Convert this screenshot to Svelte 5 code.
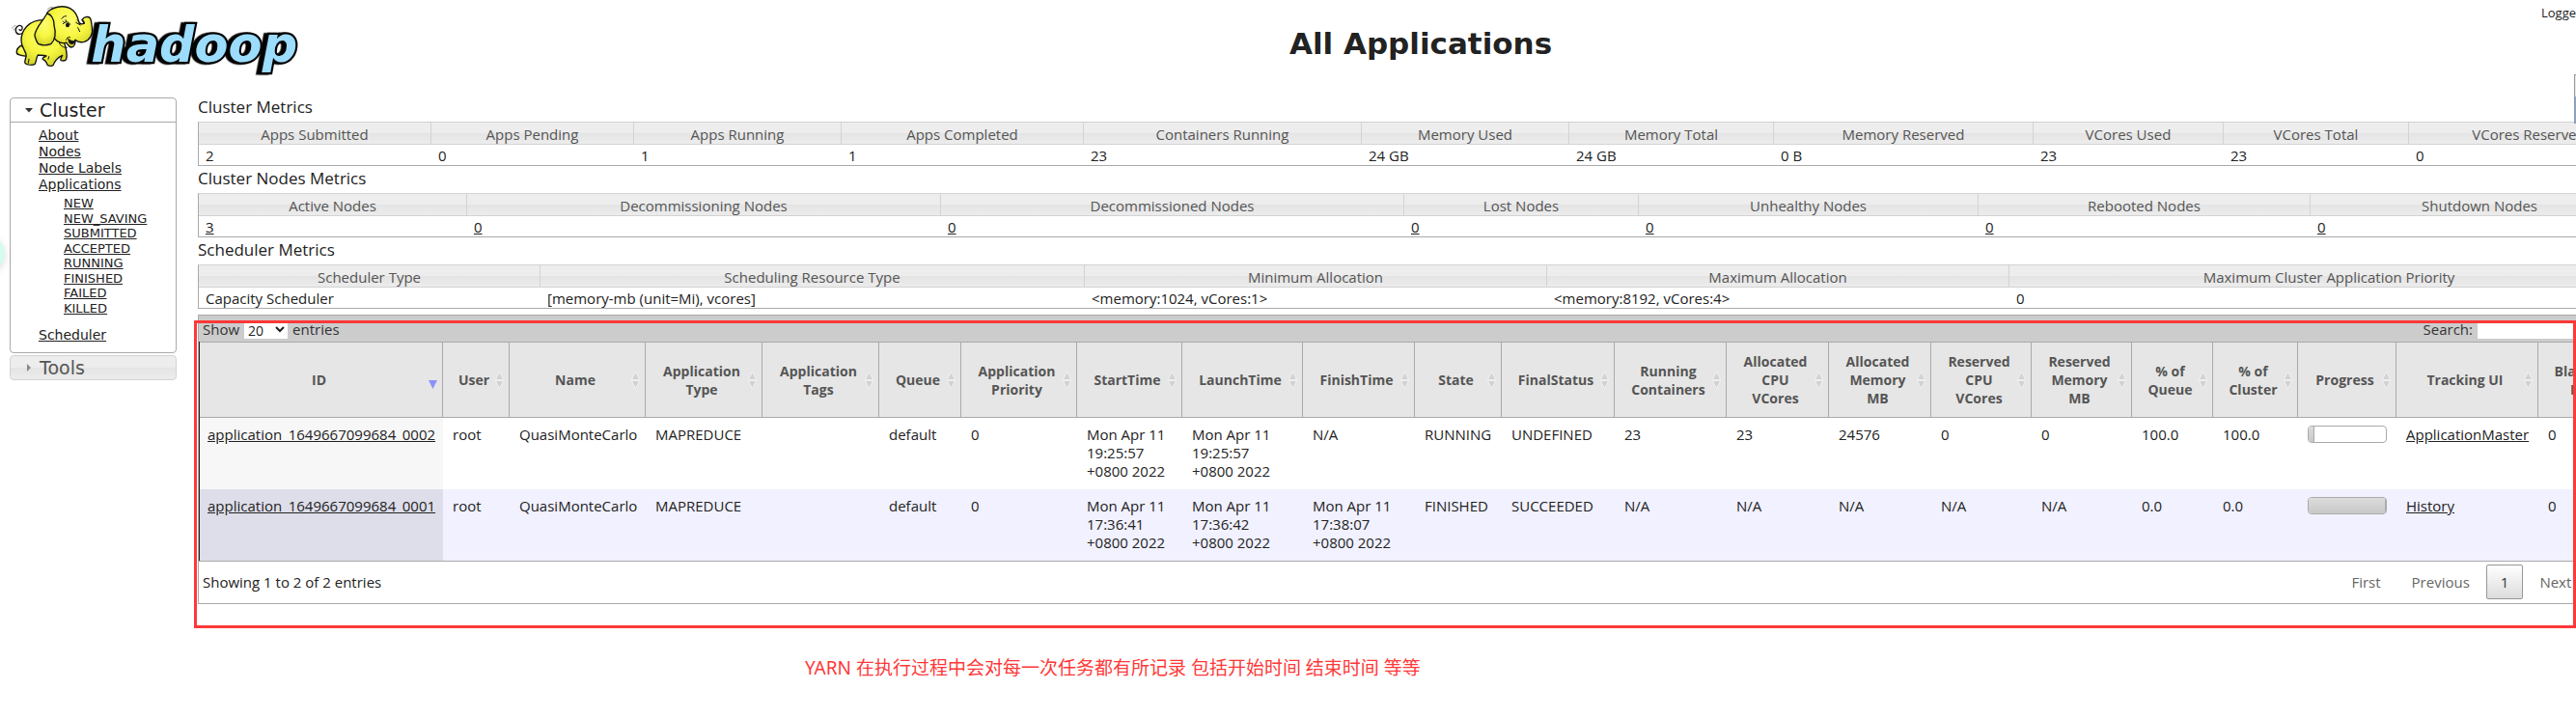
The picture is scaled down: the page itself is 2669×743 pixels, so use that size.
<script>
  const topLinks = ['About', 'Nodes', 'Node Labels', 'Applications'];
  const states = ['NEW', 'NEW_SAVING', 'SUBMITTED', 'ACCEPTED', 'RUNNING', 'FINISHED', 'FAILED', 'KILLED'];

  // Each column: [heading, value, relative width]
  const metrics = [
    {
      title: 'Cluster Metrics',
      linked: false,
      columns: [
        ['Apps Submitted', '2', 241],
        ['Apps Pending', '0', 210],
        ['Apps Running', '1', 215],
        ['Apps Completed', '1', 251],
        ['Containers Running', '23', 288],
        ['Memory Used', '24 GB', 215],
        ['Memory Total', '24 GB', 212],
        ['Memory Reserved', '0 B', 269],
        ['VCores Used', '23', 197],
        ['VCores Total', '23', 192],
        ['VCores Reserved', '0', 249]
      ]
    },
    {
      title: 'Cluster Nodes Metrics',
      linked: true,
      columns: [
        ['Active Nodes', '3', 278],
        ['Decommissioning Nodes', '0', 491],
        ['Decommissioned Nodes', '0', 480],
        ['Lost Nodes', '0', 243],
        ['Unhealthy Nodes', '0', 352],
        ['Rebooted Nodes', '0', 344],
        ['Shutdown Nodes', '0', 351]
      ]
    },
    {
      title: 'Scheduler Metrics',
      linked: false,
      columns: [
        ['Scheduler Type', 'Capacity Scheduler', 354],
        ['Scheduling Resource Type', '[memory-mb (unit=Mi), vcores]', 564],
        ['Minimum Allocation', '<memory:1024, vCores:1>', 479],
        ['Maximum Allocation', '<memory:8192, vCores:4>', 479],
        ['Maximum Cluster Application Priority', '0', 663]
      ]
    }
  ];

  const columns = [
    ['ID', 252],
    ['User', 69],
    ['Name', 141],
    ['Application Type', 121],
    ['Application Tags', 121],
    ['Queue', 85],
    ['Application Priority', 120],
    ['StartTime', 109],
    ['LaunchTime', 125],
    ['FinishTime', 116],
    ['State', 90],
    ['FinalStatus', 117],
    ['Running Containers', 116],
    ['Allocated CPU VCores', 106],
    ['Allocated Memory MB', 106],
    ['Reserved CPU VCores', 104],
    ['Reserved Memory MB', 104],
    ['% of Queue', 84],
    ['% of Cluster', 88],
    ['Progress', 102],
    ['Tracking UI', 147],
    ['Blacklisted Nodes', 115]
  ];

  const apps = [
    {
      id: 'application_1649667099684_0002',
      before: ['root', 'QuasiMonteCarlo', 'MAPREDUCE', '', 'default', '0', 'Mon Apr 11 19:25:57 +0800 2022', 'Mon Apr 11 19:25:57 +0800 2022', 'N/A', 'RUNNING', 'UNDEFINED', '23', '23', '24576', '0', '0', '100.0', '100.0'],
      progress: 7,
      tracking: 'ApplicationMaster',
      blacklisted: '0'
    },
    {
      id: 'application_1649667099684_0001',
      before: ['root', 'QuasiMonteCarlo', 'MAPREDUCE', '', 'default', '0', 'Mon Apr 11 17:36:41 +0800 2022', 'Mon Apr 11 17:36:42 +0800 2022', 'Mon Apr 11 17:38:07 +0800 2022', 'FINISHED', 'SUCCEEDED', 'N/A', 'N/A', 'N/A', 'N/A', 'N/A', '0.0', '0.0'],
      progress: 100,
      tracking: 'History',
      blacklisted: '0'
    }
  ];

  const sum = (list) => list.reduce((a, b) => a + b, 0);
  const appTotal = sum(columns.map((c) => c[1]));
</script>

<div class="viewport">
  <div class="page">
    <header>
      <a class="logo" href="#home" aria-label="Hadoop home">
        <svg viewBox="0 0 990 270" width="330" height="90">
          <defs>
            <radialGradient id="skin" cx="0.5" cy="0.35" r="0.65">
              <stop offset="0" stop-color="#fdfd70" />
              <stop offset="0.6" stop-color="#f6f641" />
              <stop offset="1" stop-color="#d6d62a" />
            </radialGradient>
          </defs>
          <text class="wordmark" x="283" y="191">hadoop</text>
          <g fill="url(#skin)" stroke="#111" stroke-width="4" stroke-linejoin="round" stroke-linecap="round">
            <path d="M78 92C70 110 52 110 49 96C47 82 62 74 69 84C71 92 64 98 60 92" fill="none" stroke-width="4" />
            <path d="M64 142C50 152 48 166 58 170C66 173 74 175 82 174L90 150Z" />
            <path d="M134 62C92 62 66 92 66 126C66 152 84 158 81 176C78 188 74 196 80 198C88 203 102 202 108 200C114 190 112 178 118 171C126 172 134 172 144 174C136 178 130 180 133 184C142 188 146 196 148 203C156 206 162 205 165 203C170 190 180 178 194 172C190 180 186 186 190 188C198 190 204 188 206 184C210 170 206 158 204 148L190 90Z" />
            <path d="M146 40C160 22 196 14 218 26C236 36 242 50 246 72C252 76 260 76 262 70L256 61C260 52 274 50 280 56C284 62 284 72 286 84C290 106 280 124 262 130C250 133 240 130 234 124C234 136 230 147 222 147C212 146 210 136 206 132C196 136 188 134 178 128L150 100Z" />
            <path d="M146 42C136 62 106 92 108 112C112 124 114 132 120 137C130 141 146 141 158 137C172 124 174 100 168 78C168 60 160 44 146 42Z" />
            <path d="M212 120C220 128 228 130 236 124C232 136 224 140 218 136C212 132 214 126 212 120Z" fill="#111" stroke-width="2" />
          </g>
          <g fill="none" stroke="#111" stroke-width="3" stroke-linecap="round">
            <path d="M196 74C202 66 214 66 218 76M200 70L196 66M206 67L204 62M192 58C196 52 200 50 206 50" />
            <path d="M240 62L252 74M236 70L250 78M242 86L248 98M254 62L262 74" />
            <path d="M148 30C150 24 156 22 164 22M152 36L158 30M38 88C40 82 42 80 48 80M42 94L46 88" stroke="#777" stroke-width="2" />
            <path d="M206 124C208 116 212 114 218 116M184 132C186 142 196 148 208 148M90 184L88 196M152 176L150 184" />
          </g>
          <ellipse cx="210" cy="78" rx="6" ry="7" fill="#111" />
        </svg>
      </a>
      <h1>All Applications</h1>
      <div class="user">Logged in as: dr.who</div>
    </header>

    <div class="body">
      <nav aria-label="Cluster navigation">
        <section class="panel">
          <h3 class="open">
            <svg width="9" height="5" viewBox="0 0 9 5"><path d="M0 0H8L4 4.500Z" fill="#333" /></svg>Cluster
          </h3>
          <ul class="links">
            {#each topLinks as link}
              <li><a href="#{link}">{link}</a></li>
            {/each}
            <li>
              <ul class="states">
                {#each states as state}
                  <li><a href="#{state}">{state}</a></li>
                {/each}
              </ul>
            </li>
            <li><a href="#scheduler">Scheduler</a></li>
          </ul>
        </section>
        <h3 class="closed">
          <svg width="9" height="9" viewBox="0 0 9 9"><path d="M2 0L6 4L2 8Z" fill="#888" /></svg>Tools
        </h3>
      </nav>

      <main>
        {#each metrics as table}
          <h2>{table.title}</h2>
          <table class="metrics">
            <colgroup>
              {#each table.columns as c}
                <col style="width: {(c[2] / sum(table.columns.map((x) => x[2]))) * 100}%" />
              {/each}
            </colgroup>
            <thead>
              <tr>{#each table.columns as c}<th>{c[0]}</th>{/each}</tr>
            </thead>
            <tbody>
              <tr>
                {#each table.columns as c}
                  <td>{#if table.linked}<a href="#nodes">{c[1]}</a>{:else}{c[1]}{/if}</td>
                {/each}
              </tr>
            </tbody>
          </table>
        {/each}

        <div class="apps">
          <div class="toolbar">
            <label>Show <select><option>20</option><option>40</option><option>60</option></select> entries</label>
            <label>Search: <input type="text" /></label>
          </div>
          <table class="grid">
            <colgroup>
              {#each columns as c}<col style="width: {(c[1] / appTotal) * 100}%" />{/each}
            </colgroup>
            <thead>
              <tr>
                {#each columns as c, i}
                  <th>
                    <div class="head">
                      <span>{c[0]}</span>
                      {#if i === 0}
                        <svg width="9" height="18" viewBox="0 0 9 18"><path d="M0 9H9L4.500 18Z" fill="#8d91fa" /></svg>
                      {:else}
                        <svg width="9" height="18" viewBox="0 0 9 18"><path d="M4.500 0.500L8.500 8.500H0.500ZM0.500 9.500H8.500L4.500 17.500Z" fill="#d2d2d2" stroke="#f4f4f4" stroke-width="0.800" /></svg>
                      {/if}
                    </div>
                  </th>
                {/each}
              </tr>
            </thead>
            <tbody>
              {#each apps as app}
                <tr>
                  <td><a href="#{app.id}">{app.id}</a></td>
                  {#each app.before as cell}<td>{cell}</td>{/each}
                  <td>
                    <div class="bar" role="progressbar" aria-label="Progress" aria-valuenow={app.progress}>
                      <div class="fill" style="width: {app.progress}%"></div>
                    </div>
                  </td>
                  <td><a href="#{app.tracking}">{app.tracking}</a></td>
                  <td>{app.blacklisted}</td>
                </tr>
              {/each}
            </tbody>
          </table>
          <div class="footer">
            <span>Showing 1 to 2 of 2 entries</span>
            <div class="pager">
              <button>First</button>
              <button>Previous</button>
              <button class="current">1</button>
              <button>Next</button>
              <button>Last</button>
            </div>
          </div>
        </div>
      </main>
    </div>
  </div>

  <p class="note">YARN 在执行过程中会对每一次任务都有所记录 包括开始时间 结束时间 等等</p>

  <div class="highlight"></div>
  <div class="bubble"></div>
  <div class="widget"></div>
</div>

<style>
  :global(body) {
    background: #fff;
  }
  .viewport {
    position: relative;
    overflow: hidden;
    min-height: 100vh;
    font: 15px/19px 'Open Sans', 'Noto Sans', sans-serif;
    color: #222;
  }
  .page {
    width: calc(100% + 77px);
    box-sizing: border-box;
  }
  a {
    color: inherit;
    text-decoration: underline;
  }
  header {
    display: flex;
    height: 90px;
  }
  .logo {
    flex: none;
    width: 198px;
    text-decoration: none;
  }
  .logo svg {
    display: block;
    overflow: visible;
  }
  .wordmark {
    font: italic bold 153px 'DejaVu Sans', sans-serif;
    fill: #9cdcfd;
    stroke: #000;
    stroke-width: 13px;
    stroke-linejoin: miter;
    paint-order: stroke;
    filter: drop-shadow(-11px 1px 0 #000);
  }
  h1 {
    flex: 1;
    margin: 0;
    font: bold 31px/90px 'DejaVu Sans', sans-serif;
    text-align: center;
  }
  .user {
    flex: none;
    width: 113px;
    margin-left: -113px;
    padding-top: 4px;
    font-size: 13px;
    white-space: nowrap;
  }
  .body {
    display: flex;
    gap: 22px;
    padding: 11px 0 0 10px;
  }
  nav {
    flex: none;
    width: 173px;
    font: 14px/17px 'DejaVu Sans', sans-serif;
  }
  .panel {
    border: 1px solid #aaa;
    border-radius: 4px;
    height: 263px;
  }
  nav h3 {
    display: flex;
    align-items: center;
    gap: 6px;
    margin: 0;
    padding-left: 15px;
    font-size: 19px;
    font-weight: normal;
    line-height: 24px;
  }
  .open {
    border-bottom: 1px solid #aaa;
  }
  nav .closed {
    margin-top: 2px;
    border: 1px solid #d3d3d3;
    border-radius: 4px;
    color: #555;
    background: linear-gradient(#ededed 50%, #e4e4e4 50%, #ececec);
  }
  .links,
  .states {
    margin: 0;
    padding: 0;
    list-style: none;
  }
  .links {
    padding: 5px 0 0 29px;
  }
  .states {
    display: grid;
    height: 124px;
    margin: 3px 0 12px;
    padding-left: 26px;
    font-size: 13px;
    line-height: 15px;
  }
  main {
    flex: 1;
    min-width: 0;
  }
  h2 {
    margin: 0;
    padding-bottom: 5px;
    font-size: 17px;
    font-weight: normal;
    line-height: 20px;
  }
  table {
    width: 100%;
    table-layout: fixed;
    border-collapse: separate;
    border-spacing: 0;
  }
  .metrics {
    margin-bottom: 3px;
    border: 1px solid #aaa;
    border-top-color: #d3d3d3;
  }
  .metrics th {
    height: 20px;
    padding: 2px 0 0;
    border-right: 1px solid #d3d3d3;
    border-bottom: 1px solid #d3d3d3;
    background: linear-gradient(#ededed 50%, #e4e4e4 50%, #ececec);
    color: #555;
    font-weight: normal;
  }
  .metrics td {
    height: 19px;
    padding: 2px 7px 0;
  }
  .apps {
    margin-top: 6px;
    border: 1px solid #aaa;
  }
  .toolbar {
    display: flex;
    justify-content: space-between;
    padding: 5px 2px 3px 4px;
    background: #ccc;
    color: #333;
  }
  .toolbar label {
    display: flex;
    align-items: center;
    gap: 5px;
    line-height: 19px;
  }
  select {
    width: 45px;
    height: 19px;
    padding: 0;
    border: 0;
    background: #fff;
    color: #222;
    font: 14px 'Open Sans', sans-serif;
  }
  input {
    box-sizing: border-box;
    width: 176px;
    height: 19px;
    border: 0;
    background: #fff;
    font: 14px 'Open Sans', sans-serif;
  }
  .grid {
    border-left: 1px solid #222;
  }
  .grid th {
    height: 77px;
    padding: 0 5px 0 12px;
    border: solid #aaa;
    border-width: 1px 1px 1px 0;
    background: #e6e6e6;
    color: #555;
    font-size: 14px;
  }
  .head {
    display: flex;
    align-items: center;
    gap: 2px;
  }
  .head span {
    flex: 1;
  }
  .head svg {
    flex: none;
  }
  .grid td {
    height: 57px;
    padding: 8px 10px 9px;
    vertical-align: top;
  }
  .grid tbody td:first-child {
    padding-left: 8px;
    background: #f7f7f7;
  }
  .grid tbody tr:nth-child(2) {
    background: #f1f1ff;
  }
  .grid tbody tr:nth-child(2) td:first-child {
    background: #dedeea;
  }
  .bar {
    box-sizing: border-box;
    height: 18px;
    overflow: hidden;
    border: 1px solid #aaa;
    border-radius: 4px;
    background: #fff;
  }
  .fill {
    box-sizing: border-box;
    height: 100%;
    border-right: 1px solid #aaa;
    background: linear-gradient(#dcdcdc, #c8c8c8);
  }
  .footer {
    display: flex;
    align-items: center;
    justify-content: space-between;
    border-top: 1px solid #aaa;
    padding: 3px 5px 4px 4px;
  }
  .pager {
    display: flex;
    gap: 2px;
  }
  button {
    height: 36px;
    padding: 0 14px;
    border: 1px solid transparent;
    border-radius: 2px;
    background: none;
    color: #666;
    font: 15px/19px 'Open Sans', sans-serif;
  }
  .current {
    border-color: #979797;
    background: linear-gradient(#fff, #dcdcdc);
    color: #333;
  }
  .note {
    margin: 52px 0 0 834px;
    color: #fe3838;
    font: 19px/28px 'Noto Sans', 'Noto Sans CJK SC', sans-serif;
  }
  /* Annotation frame and floating widgets lie over the page */
  .highlight {
    position: absolute;
    top: 332px;
    left: 201px;
    right: 0;
    height: 313px;
    border: 3px solid #fe3838;
    pointer-events: none;
  }
  .bubble {
    position: absolute;
    top: 245px;
    left: -31px;
    width: 36px;
    height: 36px;
    border-radius: 50%;
    background: #d5fbee;
    box-shadow: 0 2px 8px #0002;
  }
  .widget {
    position: absolute;
    top: 77px;
    right: 0;
    width: 1px;
    height: 49px;
    border: solid #999;
    border-width: 1px 0 1px 1px;
    background: linear-gradient(#e8e8e8 22px, #7fa8dc 22px);
  }
</style>
